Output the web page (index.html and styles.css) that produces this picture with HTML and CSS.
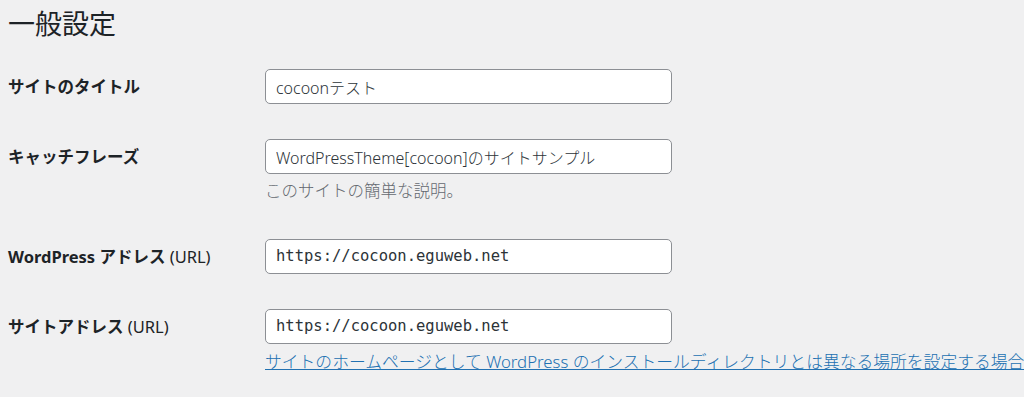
FILE: index.html
```html
<!DOCTYPE html>
<html lang="ja">
<head>
    <meta charset="UTF-8">
    <meta name="viewport" content="width=device-width, initial-scale=1.0">
    <title>一般設定</title>
    <link rel="stylesheet" href="styles.css">
</head>
<body>
<div class="wrap">
    <h1>一般設定</h1>
    <div class="form-table">
        <div class="form-row">
            <label class="row-label" for="blogname">サイトのタイトル</label>
            <div class="row-field">
                <input id="blogname" class="regular-text" type="text" value="cocoonテスト">
            </div>
        </div>
        <div class="form-row">
            <label class="row-label" for="blogdescription">キャッチフレーズ</label>
            <div class="row-field">
                <input id="blogdescription" class="regular-text" type="text" value="WordPressTheme[cocoon]のサイトサンプル">
                <p class="description">このサイトの簡単な説明。</p>
            </div>
        </div>
        <div class="form-row">
            <label class="row-label" for="siteurl">WordPress アドレス <span class="url">(URL)</span></label>
            <div class="row-field">
                <input id="siteurl" class="regular-text code" type="url" value="https://cocoon.eguweb.net">
            </div>
        </div>
        <div class="form-row">
            <label class="row-label" for="home">サイトアドレス <span class="url">(URL)</span></label>
            <div class="row-field">
                <input id="home" class="regular-text code" type="url" value="https://cocoon.eguweb.net">
                <p class="description link-desc"><a href="#">サイトのホームページとして WordPress のインストールディレクトリとは異なる場所を設定する場合</a></p>
            </div>
        </div>
    </div>
</div>
</body>
</html>
```

FILE: styles.css
```css
html, body {
    margin: 0;
    padding: 0;
    background: #f0f0f1;
    overflow: hidden;
}

body {
    font-family: "Noto Sans", "Noto Sans CJK JP", sans-serif;
    color: #1d2327;
    font-size: 16px;
}

.wrap {
    padding: 0 0 0 8px;
}

h1 {
    margin: 0;
    padding: 6px 0 0;
    font-size: 27px;
    font-weight: 400;
    line-height: 1.3;
}

.form-table {
    margin-top: 28px;
}

.form-row {
    display: grid;
    grid-template-columns: 257px 1fr;
    padding: 0 0 35px;
}

.row-label {
    font-weight: 700;
    font-size: 16.5px;
    line-height: 35px;
    white-space: nowrap;
}

.row-label .url {
    font-weight: 400;
}

.row-field {
    min-width: 0;
}

.regular-text {
    display: block;
    box-sizing: border-box;
    width: 407px;
    height: 35px;
    margin: 0;
    padding: 0 10px;
    border: 1px solid #8c8f94;
    border-radius: 5px;
    background: #fff;
    color: #2c3338;
    font-family: "Noto Sans", "Noto Sans CJK JP", sans-serif;
    font-size: 16px;
    font-weight: 300;
}

.regular-text.code {
    font-family: "DejaVu Sans Mono", "Liberation Mono", monospace;
    font-size: 15.5px;
    font-weight: 400;
}

.description {
    margin: 5px 0 0;
    color: #646970;
    font-size: 16.5px;
    font-weight: 300;
    line-height: 1.5;
    white-space: nowrap;
}

.link-desc {
    font-size: 16.8px;
}

.description a {
    color: #2271b1;
}
```
